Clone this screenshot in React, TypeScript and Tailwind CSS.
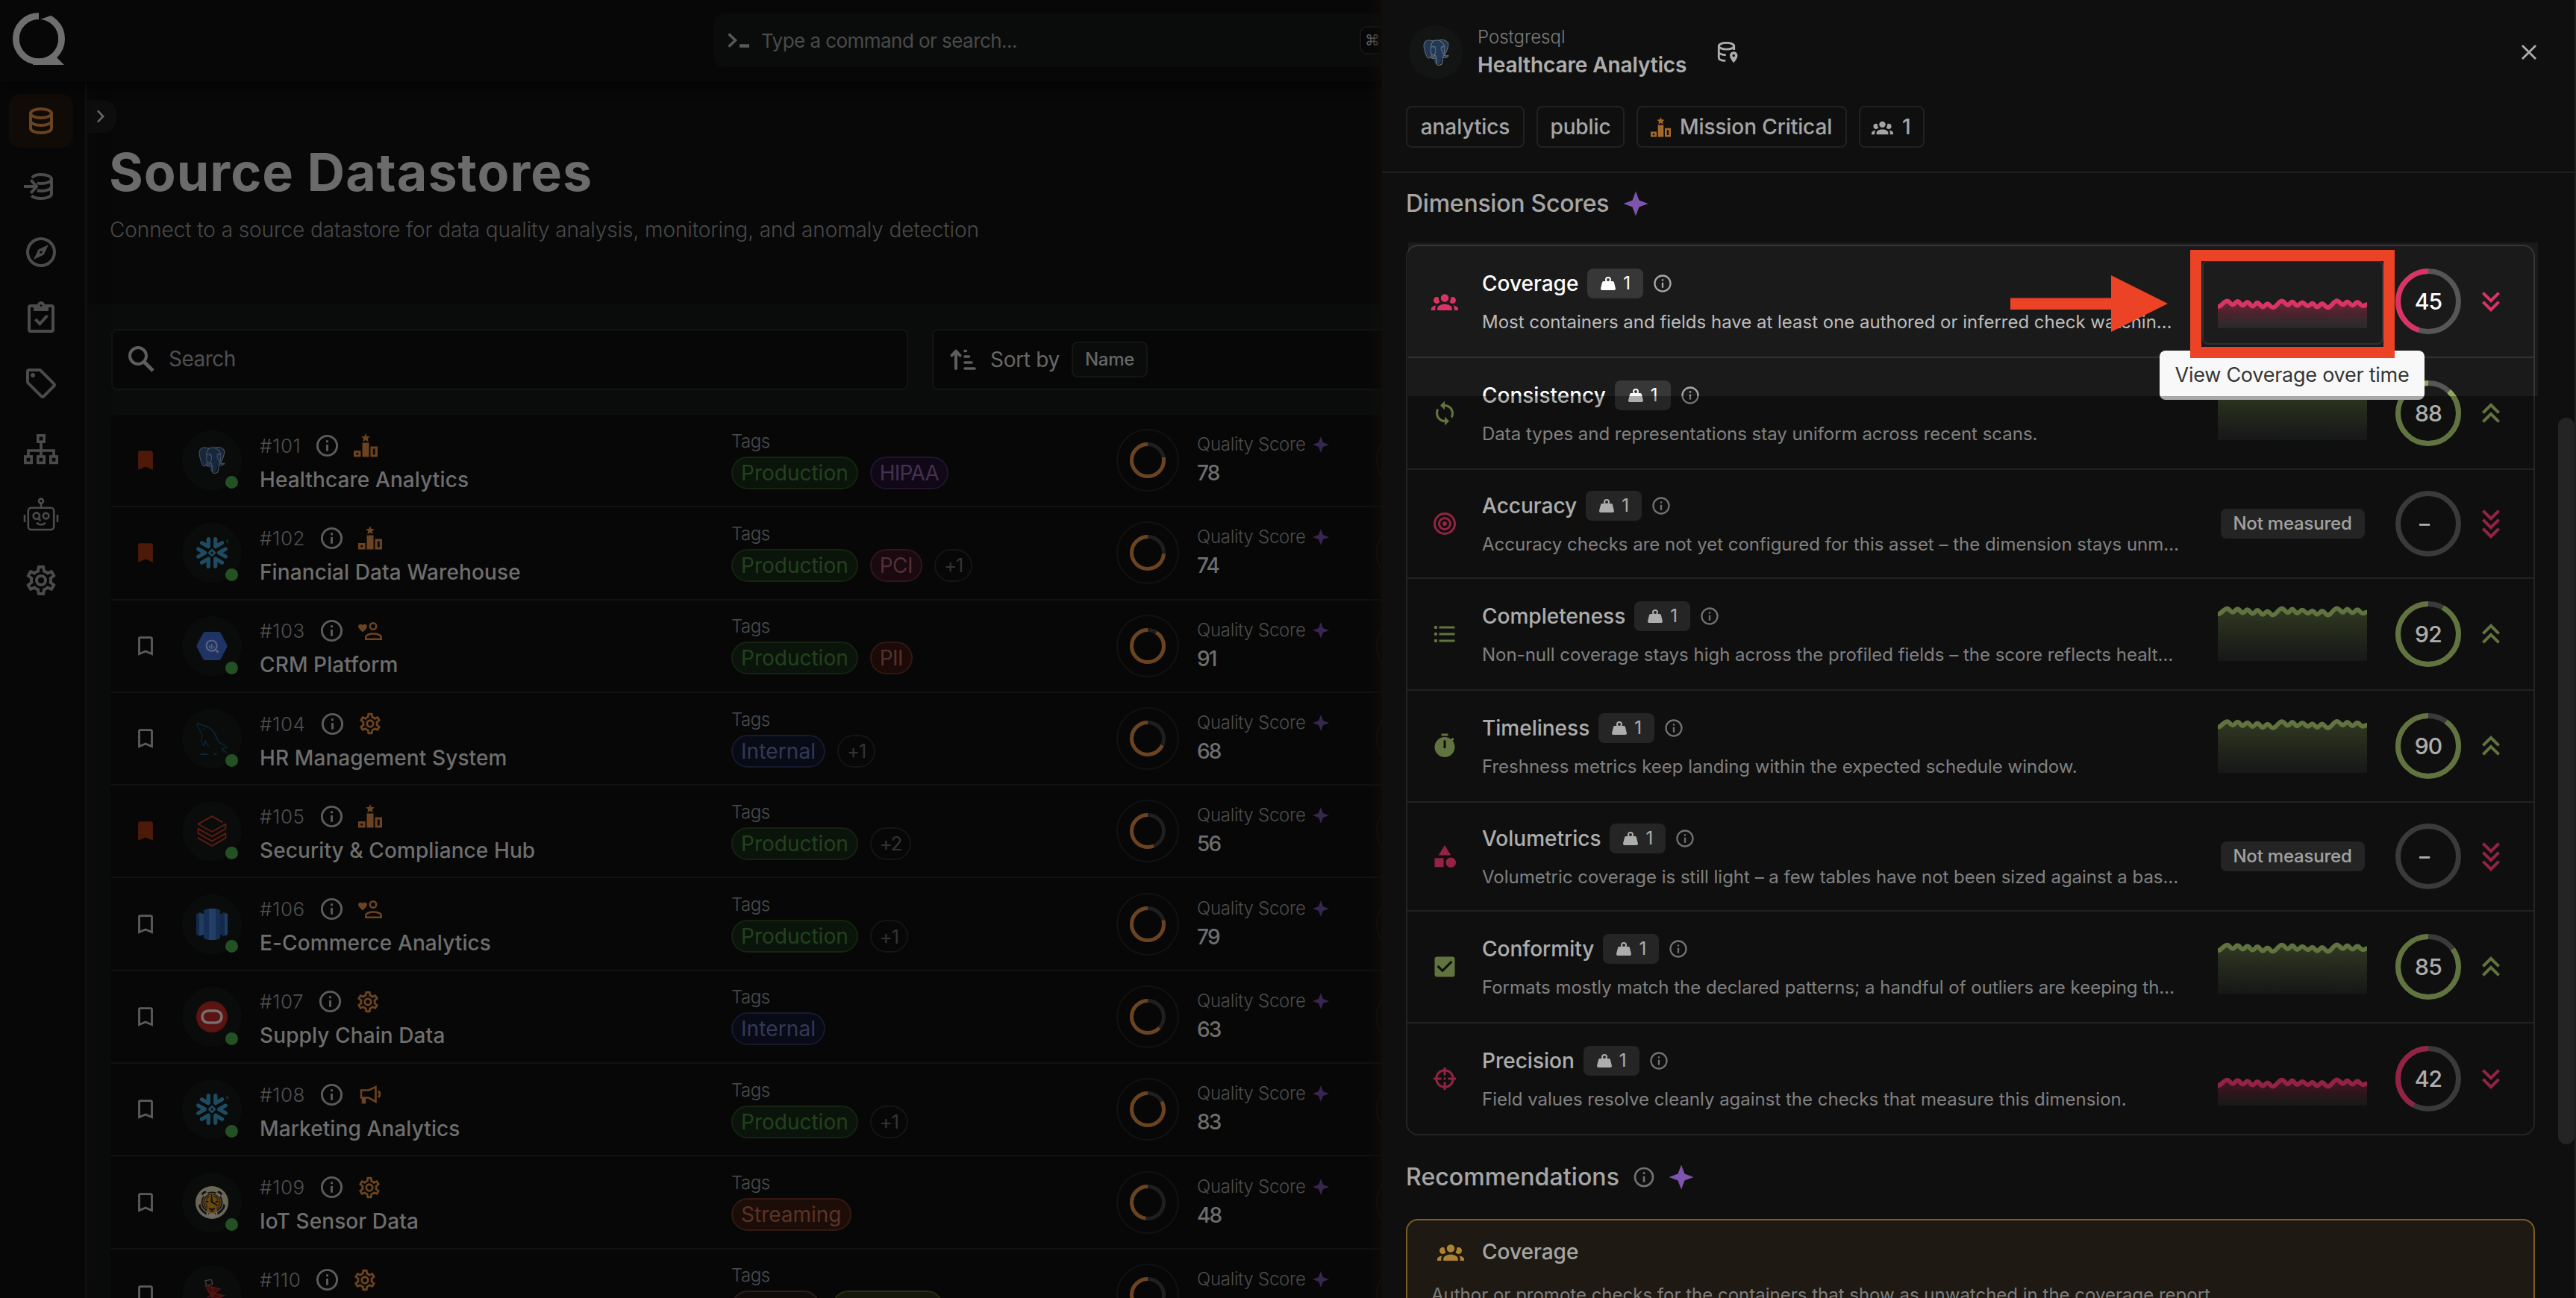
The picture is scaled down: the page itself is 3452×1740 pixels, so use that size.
import React from "react";
import { SiDatabricks, SiGooglebigquery, SiMysql, SiPostgresql, SiSnowflake, SiTimescale } from "react-icons/si";

const P = {
  group:
    "M12,5.5A3.5,3.5 0 0,1 15.5,9A3.5,3.5 0 0,1 12,12.5A3.5,3.5 0 0,1 8.5,9A3.5,3.5 0 0,1 12,5.5M5,8C5.56,8 6.08,8.15 6.53,8.42C6.38,9.85 6.8,11.27 7.66,12.38C7.16,13.34 6.16,14 5,14A3,3 0 0,1 2,11A3,3 0 0,1 5,8M19,8A3,3 0 0,1 22,11A3,3 0 0,1 19,14C17.84,14 16.84,13.34 16.34,12.38C17.2,11.27 17.62,9.85 17.47,8.42C17.92,8.15 18.44,8 19,8M5.5,18.25C5.5,16.18 8.41,14.5 12,14.5C15.59,14.5 18.5,16.18 18.5,18.25V20H5.5V18.25M0,20V18.5C0,17.11 1.89,15.94 4.45,15.6C3.86,16.28 3.5,17.22 3.5,18.25V20H0M24,20H20.5V18.25C20.5,17.22 20.14,16.28 19.55,15.6C22.11,15.94 24,17.11 24,18.5V20Z",
  info: "M11,9H13V7H11M12,20C7.59,20 4,16.41 4,12C4,7.59 7.59,4 12,4C16.41,4 20,7.59 20,12C20,16.41 16.41,20 12,20M12,2A10,10 0 0,0 2,12A10,10 0 0,0 12,22A10,10 0 0,0 22,12A10,10 0 0,0 12,2M11,17H13V11H11V17Z",
  weight:
    "M12,3A4,4 0 0,1 16,7C16,7.73 15.81,8.41 15.46,9H18C18.95,9 19.75,9.67 19.95,10.56C21.96,18.57 22,18.78 22,19A2,2 0 0,1 20,21H4A2,2 0 0,1 2,19C2,18.78 2.04,18.57 4.05,10.56C4.25,9.67 5.05,9 6,9H8.54C8.19,8.41 8,7.73 8,7A4,4 0 0,1 12,3M12,5A2,2 0 0,0 10,7A2,2 0 0,0 12,9A2,2 0 0,0 14,7A2,2 0 0,0 12,5Z",
  sync: "M12,18A6,6 0 0,1 6,12C6,11 6.25,10.03 6.7,9.2L5.24,7.74C4.46,8.97 4,10.43 4,12A8,8 0 0,0 12,20V23L16,19L12,15M12,4V1L8,5L12,9V6A6,6 0 0,1 18,12C18,13 17.75,13.97 17.3,14.8L18.76,16.26C19.54,15.03 20,13.57 20,12A8,8 0 0,0 12,4Z",
  bullseye:
    "M12,2A10,10 0 0,0 2,12A10,10 0 0,0 12,22A10,10 0 0,0 22,12A10,10 0 0,0 12,2M12,4A8,8 0 0,1 20,12A8,8 0 0,1 12,20A8,8 0 0,1 4,12A8,8 0 0,1 12,4M12,6A6,6 0 0,0 6,12A6,6 0 0,0 12,18A6,6 0 0,0 18,12A6,6 0 0,0 12,6M12,8A4,4 0 0,1 16,12A4,4 0 0,1 12,16A4,4 0 0,1 8,12A4,4 0 0,1 12,8M12,10A2,2 0 0,0 10,12A2,2 0 0,0 12,14A2,2 0 0,0 14,12A2,2 0 0,0 12,10Z",
  list: "M7,5H21V7H7V5M7,13V11H21V13H7M4,4.5A1.5,1.5 0 0,1 5.5,6A1.5,1.5 0 0,1 4,7.5A1.5,1.5 0 0,1 2.5,6A1.5,1.5 0 0,1 4,4.5M4,10.5A1.5,1.5 0 0,1 5.5,12A1.5,1.5 0 0,1 4,13.5A1.5,1.5 0 0,1 2.5,12A1.5,1.5 0 0,1 4,10.5M7,19V17H21V19H7M4,16.5A1.5,1.5 0 0,1 5.5,18A1.5,1.5 0 0,1 4,19.5A1.5,1.5 0 0,1 2.5,18A1.5,1.5 0 0,1 4,16.5Z",
  timer:
    "M19.03,7.39L20.45,5.97C20,5.46 19.55,5 19.04,4.56L17.62,6C16.07,4.74 14.12,4 12,4A9,9 0 0,0 3,13A9,9 0 0,0 12,22C17,22 21,17.97 21,13C21,10.88 20.26,8.93 19.03,7.39M13,14H11V7H13V14M15,1H9V3H15V1Z",
  shapes:
    "M11,13.5V21.5H3V13.5H11M12,2L17.5,11H6.5L12,2M17.5,13C20,13 22,15 22,17.5C22,20 20,22 17.5,22C15,22 13,20 13,17.5C13,15 15,13 17.5,13Z",
  checkbox:
    "M10,17L5,12L6.41,10.58L10,14.17L17.59,6.58L19,8M19,3H5C3.89,3 3,3.89 3,5V19A2,2 0 0,0 5,21H19A2,2 0 0,0 21,19V5C21,3.89 20.1,3 19,3Z",
  down2: "M16.59,5.59L18,7L12,13L6,7L7.41,5.59L12,10.17L16.59,5.59M16.59,11.59L18,13L12,19L6,13L7.41,11.59L12,16.17L16.59,11.59Z",
  up2: "M7.41,18.41L6,17L12,11L18,17L16.59,18.41L12,13.83L7.41,18.41M7.41,12.41L6,11L12,5L18,11L16.59,12.41L12,7.83L7.41,12.41Z",
  down3:
    "M16.59,2.59L18,4L12,10L6,4L7.41,2.59L12,7.17L16.59,2.59M16.59,8.59L18,10L12,16L6,10L7.41,8.59L12,13.17L16.59,8.59M16.59,14.59L18,16L12,22L6,16L7.41,14.59L12,19.17L16.59,14.59Z",
  bookmark: "M17,3H7A2,2 0 0,0 5,5V21L12,18L19,21V5C19,3.89 18.1,3 17,3Z",
  bookmarkO: "M17,18L12,15.82L7,18V5H17M17,3H7A2,2 0 0,0 5,5V21L12,18L19,21V5C19,3.89 18.1,3 17,3Z",
  star4: "M12,1L9,9L1,12L9,15L12,23L15,15L23,12L15,9L12,1Z",
  cog: "M12,8A4,4 0 0,1 16,12A4,4 0 0,1 12,16A4,4 0 0,1 8,12A4,4 0 0,1 12,8M12,10A2,2 0 0,0 10,12A2,2 0 0,0 12,14A2,2 0 0,0 14,12A2,2 0 0,0 12,10M10,22C9.75,22 9.54,21.82 9.5,21.58L9.13,18.93C8.5,18.68 7.96,18.34 7.44,17.94L4.95,18.95C4.73,19.03 4.46,18.95 4.34,18.73L2.34,15.27C2.21,15.05 2.27,14.78 2.46,14.63L4.57,12.97L4.5,12L4.57,11L2.46,9.37C2.27,9.22 2.21,8.95 2.34,8.73L4.34,5.27C4.46,5.05 4.73,4.96 4.95,5.05L7.44,6.05C7.96,5.66 8.5,5.32 9.13,5.07L9.5,2.42C9.54,2.18 9.75,2 10,2H14C14.25,2 14.46,2.18 14.5,2.42L14.87,5.07C15.5,5.32 16.04,5.66 16.56,6.05L19.05,5.05C19.27,4.96 19.54,5.05 19.66,5.27L21.66,8.73C21.79,8.95 21.73,9.22 21.54,9.37L19.43,11L19.5,12L19.43,13L21.54,14.63C21.73,14.78 21.79,15.05 21.66,15.27L19.66,18.73C19.54,18.95 19.27,19.04 19.05,18.95L16.56,17.95C16.04,18.34 15.5,18.68 14.87,18.93L14.5,21.58C14.46,21.82 14.25,22 14,22H10M11.25,4L10.88,6.61C9.68,6.86 8.62,7.5 7.85,8.39L5.44,7.35L4.69,8.65L6.8,10.2C6.4,11.37 6.4,12.64 6.8,13.8L4.68,15.36L5.43,16.66L7.86,15.62C8.63,16.5 9.68,17.14 10.87,17.38L11.24,20H12.76L13.13,17.39C14.32,17.14 15.37,16.5 16.14,15.62L18.57,16.66L19.32,15.36L17.2,13.81C17.6,12.64 17.6,11.37 17.2,10.2L19.31,8.65L18.56,7.35L16.15,8.39C15.38,7.5 14.32,6.86 13.12,6.62L12.75,4H11.25Z",
  compass:
    "M7,17L10.2,10.2L17,7L13.8,13.8L7,17M12,11.1A0.9,0.9 0 0,0 11.1,12A0.9,0.9 0 0,0 12,12.9A0.9,0.9 0 0,0 12.9,12A0.9,0.9 0 0,0 12,11.1M12,2A10,10 0 0,1 22,12A10,10 0 0,1 12,22A10,10 0 0,1 2,12A10,10 0 0,1 12,2M12,4A8,8 0 0,0 4,12A8,8 0 0,0 12,20A8,8 0 0,0 20,12A8,8 0 0,0 12,4Z",
  tag: "M21.41,11.58L12.41,2.58C12.04,2.21 11.53,2 11,2H4A2,2 0 0,0 2,4V11C2,11.53 2.21,12.04 2.59,12.41L11.59,21.41C11.96,21.78 12.47,22 13,22C13.53,22 14.04,21.79 14.41,21.41L21.41,14.41C21.78,14.04 22,13.53 22,13C22,12.47 21.79,11.96 21.41,11.58M13,20L4,11V4H11L20,13M6.5,5A1.5,1.5 0 0,1 8,6.5A1.5,1.5 0 0,1 6.5,8A1.5,1.5 0 0,1 5,6.5A1.5,1.5 0 0,1 6.5,5Z",
};

type IconName = keyof typeof P;

function Icon({ name, className }: { name: IconName; className: string }) {
  return (
    <svg viewBox="0 0 24 24" className={`shrink-0 ${className}`} fill="currentColor">
      <path fillRule="evenodd" d={P[name]} />
    </svg>
  );
}

function Stroke({ className, children, w = 2 }: { className: string; children: React.ReactNode; w?: number }) {
  return (
    <svg viewBox="0 0 24 24" className={`shrink-0 ${className}`} fill="none" stroke="currentColor" strokeWidth={w}>
      {children}
    </svg>
  );
}

/* ---------- sidebar ---------- */

function Sidebar() {
  return (
    <nav className="z-10 flex w-[116px] shrink-0 flex-col gap-4 border-r-2 border-[#14110f] bg-[#070707] pt-4 pl-3 text-[#4b4b4b] shadow-[0_0_24px_#0c0b0a]">
      <div className="flex h-[72px] w-[86px] items-center justify-center rounded-[16px] bg-[#110b08]">
        <Stroke className="size-12 text-[#6b4320]">
          <ellipse cx="12" cy="7" rx="7" ry="3" />
          <path d="M5 7v10c0 1.7 3.1 3 7 3s7-1.3 7-3V7M5 12c0 1.7 3.1 3 7 3s7-1.3 7-3" />
        </Stroke>
      </div>
      <div className="flex h-[72px] w-[86px] items-center justify-center">
        <Stroke className="size-12">
          <path d="M6 6.2C6.8 4.9 9.2 4 12 4c3.900 0 7 1.300 7 3s-3.100 3-7 3c-1 0-1.900-.1-2.700-.3M19 7v10c0 1.700-3.100 3-7 3-2.900 0-5.300-.7-6.400-1.800M19 12c0 1.700-3.100 3-7 3-1 0-1.800-.1-2.600-.2" />
          <path d="M0.500 12h8M5.200 7.600L9 12l-3.800 4.400" />
        </Stroke>
      </div>
      <div className="flex h-[72px] w-[86px] items-center justify-center">
        <Icon name="compass" className="size-12" />
      </div>
      <div className="flex h-[72px] w-[86px] items-center justify-center">
        <Stroke className="size-12">
          <rect x="4" y="4" width="16" height="17" rx="1" />
          <path d="M7 4h10v3.500H7z M9.500 3.500a2.500 2.500 0 0 1 5 0" fill="currentColor" stroke="none" />
          <path d="M8.200 13l3 3 5-5.500" />
          <circle cx="12" cy="3.800" r=".7" fill="#070707" stroke="none" />
        </Stroke>
      </div>
      <div className="flex h-[72px] w-[86px] items-center justify-center">
        <Icon name="tag" className="size-12" />
      </div>
      <div className="flex h-[72px] w-[86px] items-center justify-center">
        <Stroke className="size-12" w={1.8}>
          <rect x="9.900" y="2.900" width="4.200" height="4.200" />
          <rect x="1.400" y="17" width="4.200" height="4.200" />
          <rect x="9.900" y="17" width="4.200" height="4.200" />
          <rect x="18.400" y="17" width="4.200" height="4.200" />
          <path d="M12 7v10M3.500 17v-4h17v4" />
        </Stroke>
      </div>
      <div className="flex h-[72px] w-[86px] items-center justify-center">
        <Stroke className="size-12" w={1.3}>
          <circle cx="12" cy="2.800" r="1.500" />
          <path d="M12 4.400v3M1 12v5M23 12v5" />
          <rect x="3.400" y="7.400" width="17.200" height="14.600" rx="2" />
          <circle cx="8.900" cy="12.800" r="2.100" />
          <path d="M10.200 14.300l1.500 1.800" />
          <circle cx="15.300" cy="12.800" r="1.900" />
          <path d="M9.300 17.200c.5 1.900 4.900 1.900 5.400 0" />
        </Stroke>
      </div>
      <div className="flex h-[72px] w-[86px] items-center justify-center">
        <Icon name="cog" className="size-12" />
      </div>
    </nav>
  );
}

/* ---------- header ---------- */

function Header() {
  return (
    <header className="z-20 flex h-[110px] shrink-0 items-start bg-[#070707] shadow-[0_4px_14px_#030303]">
      <svg viewBox="0 0 72 72" className="mt-4 ml-4 size-[72px]" fill="#6e6e6e">
        <circle cx="36" cy="36" r="30.500" fill="none" stroke="#6e6e6e" strokeWidth="9" />
        <path d="M28 71h42L59.500 60.500 52 63l-24 3z" />
        <circle cx="36" cy="36.300" r="26" fill="#070707" />
        <path d="M36 0v10h2L53 4.500V0z" fill="#070707" />
      </svg>
      <div className="mt-[18px] ml-[869px] flex h-[72px] w-[1000px] items-center rounded-[12px] bg-[#0a0c0b] pl-[18px]">
        <svg viewBox="0 0 29 20" className="h-5 w-[29px]" fill="none" stroke="#575757">
          <path d="M1.500 1.500L10.500 10l-9 8.500" strokeWidth="3.600" />
          <path d="M16 17.500h13" strokeWidth="4.500" />
        </svg>
        <span className="ml-4 w-[802px] text-[26px] tracking-[-0.550px] whitespace-nowrap text-[#4a4a4a]">Type a command or search...</span>
        <span className="flex h-[38px] w-10 items-center rounded-[10px] border-2 border-[#161616] bg-[#070707] pl-[5px] font-['DejaVu_Sans'] text-xl text-[#606060]">⌘</span>
      </div>
    </header>
  );
}

/* ---------- data store list ---------- */

function Podium({ className }: { className: string }) {
  return (
    <svg viewBox="0 0 32 32" className={`shrink-0 ${className}`} fill="currentColor">
      <path d="M16 0l1.700 3.900 4.300.4-3.200 2.800.9 4.200L16 9.100l-3.700 2.200.9-4.200L10 4.300l4.300-.4z" />
      <rect x="11.500" y="12.500" width="9" height="19" />
      <path fillRule="evenodd" d="M0 23h9.500v8.500H0zM3.300 26v2.600h2.900V26zM22.500 17.500H32v14h-9.500zM25.800 20.500v8h2.900v-8z" />
    </svg>
  );
}

function HeartPerson({ className }: { className: string }) {
  return (
    <svg viewBox="0 0 32 32" className={`shrink-0 ${className}`} fill="none" stroke="currentColor">
      <path d="M6 17.500C2 14 0 12 0 9.600 0 6.600 4 5.500 6 8.200 8 5.500 12 6.600 12 9.600c0 2.400-2 4.400-6 7.900z" fill="currentColor" stroke="none" />
      <circle cx="20" cy="9.500" r="4.200" strokeWidth="2.600" />
      <path d="M10.300 26.700v-2.500c0-3 5-4.700 10-4.700s10.400 1.700 10.400 4.700v2.500z" strokeWidth="2.600" />
    </svg>
  );
}

function Bullhorn({ className }: { className: string }) {
  return (
    <svg viewBox="0 0 32 32" className={`shrink-0 ${className}`} fill="none" stroke="currentColor" strokeWidth="2.600">
      <path d="M4 10.500h10L23.500 6v20L14 20.500H4z" />
      <path d="M7.500 20.500v8" strokeWidth="5.500" />
      <path d="M27 11.500c2.500 2.500 2.500 6 0 8.500" strokeWidth="3" />
    </svg>
  );
}

function MiniIcon({ kind }: { kind: string }) {
  if (kind === "podium") return <Podium className="size-8" />;
  if (kind === "heart") return <HeartPerson className="size-8" />;
  if (kind === "horn") return <Bullhorn className="size-8" />;
  return <Icon name="cog" className="-ml-[2px] size-[34px]" />;
}

function Elephant({ body, line, className }: { body: string; line: string; className: string }) {
  return (
    <div className={`relative ${className}`}>
      <svg viewBox="0 0 24 24" className="absolute inset-0 size-full" fill={body}>
        <path d="M1 5C1 2 4 .8 8 1c3-.8 6-.8 8 0 4-.5 7 1 7 4 0 4-2 8-4 10 2 .2 3.500 0 4-.3-1 2-4 2.300-6 2.100 0 3-.8 6-3.500 6-3 0-3.500-3-3.500-6.500-2 1.500-3.500.8-5-.2C3 15 1 9 1 5z" />
      </svg>
      <SiPostgresql className="absolute inset-0 size-full" color={line} />
    </div>
  );
}

function Logo({ kind }: { kind: string }) {
  switch (kind) {
    case "postgres":
      return <Elephant className="size-9" body="#16263c" line="#4a545f" />;
    case "snowflake":
      return <SiSnowflake className="size-11" viewBox="0 0 22.800 24" color="#1f4b62" />;
    case "bigquery":
      return (
        <svg viewBox="0 0 42 38" className="h-[38px] w-[42px]">
          <path d="M12 0h18q2 0 3 2l8 15q1 2 0 4l-8 15q-1 2-3 2H12q-2 0-3-2L1 21q-1-2 0-4L9 2q1-2 3-2z" fill="#1f3464" />
          <SiGooglebigquery x="12.500" y="10.500" size={18} color="#5a6480" />
        </svg>
      );
    case "mysql":
      return <SiMysql className="size-11" viewBox="13.900 3.600 10 10" color="#0d2536" />;
    case "databricks":
      return <SiDatabricks className="size-[42px]" color="#5c1b12" />;
    case "redshift":
      return (
        <svg viewBox="0 0 42 42" className="size-[42px]">
          <path d="M0 7l6-2v32l-6-2z" fill="#12294a" />
          <path d="M4 5.500L10 7v28l-6 1.500z" fill="#213c61" />
          <path d="M42 7l-6-2v32l6-2z" fill="#213c61" />
          <path d="M38 5.500L32 7v28l6 1.500z" fill="#12294a" />
          <path d="M10 2l6-2h9v42h-9l-6-2z" fill="#172f54" />
          <path d="M17 0h8l7 2v38l-7 2h-8z" fill="#233f66" />
          <path d="M26 0l6 2v38l-6 2z" fill="#162e51" />
        </svg>
      );
    case "oracle":
      return (
        <svg viewBox="0 0 42 42" className="size-[42px]">
          <circle cx="21" cy="21" r="21" fill="#5b1412" />
          <rect x="8" y="13" width="26" height="16" rx="8" fill="none" stroke="#747070" strokeWidth="3.600" />
        </svg>
      );
    case "tiger":
      return (
        <svg viewBox="0 0 44 44" className="size-11">
          <circle cx="22" cy="22" r="22" fill="#6c6655" />
          <circle cx="22" cy="23" r="13" fill="#6b4a12" />
          <SiTimescale x="4" y="5" size={36} color="#10131c" />
          <path d="M18 37h8v4h-8z" fill="#6c6c6c" />
        </svg>
      );
    default:
      return (
        <svg viewBox="0 0 42 42" className="size-[42px]" fill="none">
          <path d="M12 2l8-2 2 6-8 3z" stroke="#3d3d3d" strokeWidth="1.500" />
          <path d="M12 8l20 5-8 6 13 3-14 5-6-10zM17 17l7 2M20 10l4 9M15 24l9-4" fill="#3b0f0d" stroke="#571714" strokeWidth="1.500" />
        </svg>
      );
  }
}

const CHIP: Record<string, string> = {
  Production: "bg-[#0b140b] border-[#15230f] text-[#23411f]",
  HIPAA: "bg-[#110817] border-[#21142c] text-[#45304f] tracking-[-0.800px]",
  PCI: "bg-[#1a090e] border-[#31161d] text-[#52303a] tracking-[-0.500px]",
  PII: "bg-[#1c0a08] border-[#321813] text-[#55312c] tracking-[-0.500px]",
  Internal: "bg-[#080b16] border-[#161a2d] text-[#333855] tracking-[0.100px]",
  Streaming: "bg-[#1d0d09] border-[#331a12] text-[#5b3326]",
  brown: "w-[119px] bg-[#110c0a] border-[#2a1f1b]",
  olive: "w-[149px] bg-[#14170a] border-[#272d12]",
};

function Donut({ value, className, r, w, track, bar }: { value: number; className: string; r: number; w: number; track: string; bar: string }) {
  const size = 2 * r + w;
  return (
    <svg viewBox={`0 0 ${size} ${size}`} className={className} fill="none" strokeWidth={w}>
      <circle cx={size / 2} cy={size / 2} r={r} stroke={track} />
      {value > 0 && (
        <circle
          cx={size / 2}
          cy={size / 2}
          r={r}
          stroke={bar}
          pathLength={100}
          strokeDasharray={`${value} 100`}
          transform={`rotate(-90 ${size / 2} ${size / 2}) translate(0 ${size}) scale(1 -1)`}
        />
      )}
    </svg>
  );
}

type Store = { id: string; name: string; saved?: boolean; logo: string; mini: string; tags: string[]; score: number | null };

const STORES: Store[] = [
  { id: "#101", name: "Healthcare Analytics", saved: true, logo: "postgres", mini: "podium", tags: ["Production", "HIPAA"], score: 78 },
  { id: "#102", name: "Financial Data Warehouse", saved: true, logo: "snowflake", mini: "podium", tags: ["Production", "PCI", "+1"], score: 74 },
  { id: "#103", name: "CRM Platform", logo: "bigquery", mini: "heart", tags: ["Production", "PII"], score: 91 },
  { id: "#104", name: "HR Management System", logo: "mysql", mini: "cog", tags: ["Internal", "+1"], score: 68 },
  { id: "#105", name: "Security & Compliance Hub", saved: true, logo: "databricks", mini: "podium", tags: ["Production", "+2"], score: 56 },
  { id: "#106", name: "E-Commerce Analytics", logo: "redshift", mini: "heart", tags: ["Production", "+1"], score: 79 },
  { id: "#107", name: "Supply Chain Data", logo: "oracle", mini: "cog", tags: ["Internal"], score: 63 },
  { id: "#108", name: "Marketing Analytics", logo: "snowflake", mini: "horn", tags: ["Production", "+1"], score: 83 },
  { id: "#109", name: "IoT Sensor Data", logo: "tiger", mini: "cog", tags: ["Streaming"], score: 48 },
  { id: "#110", name: "", logo: "mssql", mini: "cog", tags: ["brown", "olive"], score: null },
];

function StoreRow({ s }: { s: Store }) {
  return (
    <div className="flex h-[124.300px] shrink-0 items-center border-b-[2px] border-[#121212] bg-[#070707] pl-[29px] whitespace-nowrap">
      <Icon name={s.saved ? "bookmark" : "bookmarkO"} className={s.saved ? "size-[34px] text-[#4d1a09]" : "size-[34px] text-[#5c5c5c]"} />
      <div className="relative ml-8 flex size-20 shrink-0 items-center justify-center rounded-full bg-[#0a0c0b]">
        <Logo kind={s.logo} />
        <span className="absolute right-[5px] bottom-[2px] size-[17px] rounded-full bg-[#245123]" />
      </div>
      <div className="ml-6 flex w-[632px] shrink-0 flex-col gap-[9px] pt-[5px]">
        <div className="flex h-9 items-center">
          <span className="text-[26px] font-light tracking-[0.600px] text-[#505050]">{s.id}</span>
          <Icon name="info" className="ml-[18px] size-[35px] text-[#5c5c5c]" />
          <span className="ml-[18px] text-[#6b4320]">
            <MiniIcon kind={s.mini} />
          </span>
        </div>
        <div className="flex h-9 items-center pt-px text-[28px] font-medium tracking-[0.100px] text-[#6e6e6e]">{s.name}</div>
      </div>
      <div className="flex w-[516px] shrink-0 flex-col gap-1 pb-[3px]">
        <div className="flex h-8 items-center text-[24px] font-light tracking-[-0.500px] text-[#4c4c4c]">Tags</div>
        <div className="flex gap-4">
          {s.tags.map((t) =>
            t.startsWith("+") ? (
              <span key={t} className="flex h-11 items-center rounded-full border-2 border-[#151515] px-[11px] text-[26px] tracking-[-1.500px] text-[#333333]">
                {t}
              </span>
            ) : (
              <span key={t} className={`flex h-11 items-center rounded-full border-2 px-[11px] text-[28px] ${CHIP[t]}`}>
                {t === "brown" || t === "olive" ? "" : t}
              </span>
            ),
          )}
        </div>
      </div>
      <div className="flex size-[84px] shrink-0 items-center justify-center rounded-full border-2 border-[#121212]">
        <Donut value={s.score ?? 55} className="size-12" r={21.5} w={5} track="#1f1f1f" bar="#6b4320" />
      </div>
      <div className="ml-6 flex w-[240px] shrink-0 flex-col gap-[2px]">
        <div className="flex h-8 items-center text-[24px] font-light tracking-[-0.300px] text-[#4c4c4c]">
          Quality Score
          <Icon name="star4" className="ml-2 size-6 text-[#372650]" />
        </div>
        <div className="flex h-10 items-center text-[28px] font-medium tracking-[-1.800px] text-[#6e6e6e]">{s.score}</div>
      </div>
      <div className="size-[84px] shrink-0 rounded-full border-2 border-[#121212]" />
    </div>
  );
}

function Main() {
  return (
    <main className="flex min-w-0 flex-1 flex-col bg-[#080808]">
      <div className="flex h-[298px] shrink-0 flex-col">
        <div className="mt-6 flex h-11 w-10 items-center justify-center rounded-r-[18px] bg-[#0e0e0e]">
          <svg viewBox="0 0 12 20" className="mr-1 h-[18px] w-[11px]" fill="none" stroke="#6b6b6b" strokeWidth="3">
            <path d="M2 1.500L10 10l-8 8.500" />
          </svg>
        </div>
        <h1 className="mt-[12px] ml-[30px] flex h-20 items-center text-[70px] font-bold tracking-[1px] whitespace-nowrap text-[#6b6b6b]">Source Datastores</h1>
        <p className="mt-[18px] ml-[31px] flex h-10 items-center text-[28px] font-light tracking-[-0.090px] whitespace-nowrap text-[#484848]">
          Connect to a source datastore for data quality analysis, monitoring, and anomaly detection
        </p>
      </div>
      <div className="flex flex-1 flex-col bg-[#0a0c0b] pl-8">
        <div className="flex h-[148px] shrink-0 gap-8 pt-[33px] pl-px">
          <div className="flex h-[82px] w-[1068px] items-center rounded-[8px] border-2 border-[#131313] bg-[#070707] pb-[2px] pl-5 text-[28px] tracking-[-0.500px] text-[#4f4f4f]">
            <svg viewBox="0 0 36 36" className="mr-[19px] size-9" fill="none" stroke="#5e5e5e">
              <circle cx="14" cy="14" r="11" strokeWidth="4" />
              <path d="M22 22l12 12" strokeWidth="5" />
            </svg>
            Search
          </div>
          <div className="flex h-[82px] flex-1 items-center rounded-[8px] border-2 border-[#131313] bg-[#070707] pl-[22px] text-[28px] tracking-[-0.300px] text-[#676767]">
            <svg viewBox="0 0 36 28" className="mr-[18px] h-7 w-9" fill="none" stroke="#5e5e5e" strokeWidth="4" strokeLinecap="round" strokeLinejoin="round">
              <path d="M8 26V4M2.500 8.500L8 2.500l5.500 6" />
              <path d="M20 2.500h1.500M20 10h5.500M20 18h9M20 26h13" strokeWidth="3.600" />
            </svg>
            Sort by
            <span className="ml-4 flex h-12 w-[102px] items-center justify-center rounded-[8px] border-2 border-[#151515] bg-[#0a0c0b] text-[24px] font-medium">Name</span>
          </div>
        </div>
        <div className="ml-px flex flex-col overflow-hidden rounded-tl-[8px]">
          {STORES.map((s) => (
            <StoreRow key={s.id} s={s} />
          ))}
        </div>
      </div>
    </main>
  );
}

/* ---------- drawer ---------- */

const WAVE: [number, number][] = [
  [0, 3.5], [12.7, -4], [20, 1], [26.5, -3.5], [33.4, 1.8], [39.5, -2.5], [46.800, 2.8], [53, -1.8], [60.3, 4], [66.4, -0.4],
  [73.7, 4.6], [86, -4], [94, 1.4], [99.800, -3.2], [106.3, 2.1], [113.2, -2.1], [120.5, 2.5], [126.7, -1], [133.2, 3.9],
  [139.7, -0.7], [147.4, 4.6], [159.7, -4.3], [167.8, 1], [173.5, -3.2], [180.4, 1.8], [187, -2.5], [194.2, 2.5], [200, 0.7],
];

function Sparkline({ value, color }: { value: number; color: string }) {
  const base = 72 - value * 0.72;
  const y = (i: number) => (base + WAVE[i][1]).toFixed(1);
  let line = `M${WAVE[0][0]} ${y(0)}`;
  for (let i = 1; i < WAVE.length; i++) {
    const dx = (WAVE[i][0] - WAVE[i - 1][0]) * 0.38;
    line += `C${(WAVE[i - 1][0] + dx).toFixed(1)} ${y(i - 1)} ${(WAVE[i][0] - dx).toFixed(1)} ${y(i)} ${WAVE[i][0]} ${y(i)}`;
  }
  const id = `spark-${value}`;
  return (
    <svg viewBox="0 0 200 72" className="h-[72px] w-[200px] shrink-0 overflow-visible">
      <defs>
        <linearGradient id={id} x1="0" y1="0" x2="0" y2="1">
          <stop offset="0" stopColor={color} stopOpacity="0.42" />
          <stop offset="0.5" stopColor={color} stopOpacity="0.24" />
          <stop offset="1" stopColor="#8fa09a" stopOpacity="0.09" />
        </linearGradient>
      </defs>
      <path d={`${line}V72H0Z`} fill={`url(#${id})`} />
      <path d={line} fill="none" stroke={color} strokeWidth="6" strokeLinejoin="round" />
    </svg>
  );
}

const GREEN = "#8faa5d";
const PINK = "#d93463";

function Crosshair() {
  return (
    <Stroke className="size-9">
      <circle cx="12" cy="12" r="7.500" />
      <path d="M12 2v7M12 15v7M2 12h7M15 12h7M11 12h2" />
    </Stroke>
  );
}

type Dim = { name: string; icon: React.ReactNode; text: string; value: number | null; h: string; arrow: IconName; good: boolean };

const DIMS: Dim[] = [
  { name: "Coverage", icon: <Icon name="group" className="size-9" />, text: "Most containers and fields have at least one authored or inferred check watchin…", value: 45, h: "h-[150px]", arrow: "down2", good: false },
  { name: "Consistency", icon: <Icon name="sync" className="size-9" />, text: "Data types and representations stay uniform across recent scans.", value: 88, h: "h-[150px]", arrow: "up2", good: true },
  { name: "Accuracy", icon: <Icon name="bullseye" className="size-9" />, text: "Accuracy checks are not yet configured for this asset – the dimension stays unm…", value: null, h: "h-[146px]", arrow: "down3", good: false },
  { name: "Completeness", icon: <Icon name="list" className="size-9" />, text: "Non-null coverage stays high across the profiled fields – the score reflects healt…", value: 92, h: "h-[150px]", arrow: "up2", good: true },
  { name: "Timeliness", icon: <Icon name="timer" className="size-9" />, text: "Freshness metrics keep landing within the expected schedule window.", value: 90, h: "h-[150px]", arrow: "up2", good: true },
  { name: "Volumetrics", icon: <Icon name="shapes" className="size-9" />, text: "Volumetric coverage is still light – a few tables have not been sized against a bas…", value: null, h: "h-[146px]", arrow: "down3", good: false },
  { name: "Conformity", icon: <Icon name="checkbox" className="size-9" />, text: "Formats mostly match the declared patterns; a handful of outliers are keeping th…", value: 85, h: "h-[150px]", arrow: "up2", good: true },
  { name: "Precision", icon: <Crosshair />, text: "Field values resolve cleanly against the checks that measure this dimension.", value: 42, h: "h-[148px]", arrow: "down2", good: false },
];

function DimensionRow({ d }: { d: Dim }) {
  const tone = d.good ? "text-[#8faa5d]" : "text-[#d93463]";
  return (
    <div className={`flex shrink-0 items-center border-b-2 border-[#323232] pr-[33px] pl-8 whitespace-nowrap last:border-b-0 ${d.h}`}>
      <div className={tone}>{d.icon}</div>
      <div className="ml-8 flex min-w-0 flex-1 flex-col gap-[14px] pt-px">
        <div className="flex h-10 items-center text-[28px] font-medium text-white">
          {d.name}
          <span className="ml-3 flex h-10 items-center gap-2 rounded-[8px] bg-[#373737] pr-[17px] pl-4 text-[24px] font-normal">
            <Icon name="weight" className="size-6" />
            <span>1</span>
          </span>
          <Icon name="info" className="ml-3 size-7 text-[#a8a8a8]" />
        </div>
        <div className="flex h-9 items-center text-[24px] tracking-[-0.010px] text-[#bdbdbd]">{d.text}</div>
      </div>
      <div className="flex w-[200px] shrink-0 justify-center">
        {d.value === null ? (
          <span className="flex h-10 w-[193px] items-center justify-center rounded-[8px] bg-[#353535] text-[24px] font-medium tracking-[-0.200px] text-[#ededed]">Not measured</span>
        ) : (
          <Sparkline value={d.value} color={d.good ? GREEN : PINK} />
        )}
      </div>
      <div className="relative ml-[38px] flex size-[88px] shrink-0 items-center justify-center">
        <Donut value={d.value ?? 0} className="absolute inset-0 size-full" r={40.5} w={7} track="#565656" bar={d.good ? GREEN : PINK} />
        {d.value === null ? (
          <span className="relative mr-[10px] text-[28px] font-medium text-white">–</span>
        ) : (
          <span className="relative text-[30px] font-medium tracking-[-0.800px] text-white">{d.value}</span>
        )}
      </div>
      <Icon name={d.arrow} className={`ml-4 size-12 ${tone}`} />
    </div>
  );
}

function Drawer() {
  return (
    <aside className="absolute top-0 right-0 z-30 h-[1740px] w-[1600px] overflow-hidden bg-[#171717]">
      <div className="flex h-full flex-col border-r-2 border-[#303030]">
        <div className="flex h-[232px] shrink-0 flex-col border-b-2 border-[#323232] px-8 pt-[34px]">
          <div className="flex items-center pl-1 whitespace-nowrap">
            <div className="flex size-[72px] items-center justify-center rounded-full bg-[#1c2020]">
              <Elephant className="size-[35px]" body="#31557f" line="#98a8b8" />
            </div>
            <div className="ml-5 flex w-[283px] flex-col">
              <span className="flex h-7 items-center text-[24px] font-light text-[#b5b5b5]">Postgresql</span>
              <span className="mt-[5px] flex h-9 items-center text-[28px] font-semibold tracking-[-0.100px] text-white">Healthcare Analytics</span>
            </div>
            <svg viewBox="0 0 24 24" className="ml-[34px] size-9 text-white" fill="none" stroke="currentColor" strokeWidth="1.900">
              <ellipse cx="11" cy="6.500" rx="6.800" ry="2.900" />
              <path d="M4.200 6.500v10.300c0 1.600 2.500 2.700 6 2.800M4.200 11.600c0 1.700 2.800 2.900 6.300 2.900M17.800 6.500V10" />
              <path fillRule="evenodd" stroke="none" fill="currentColor" d="M17.500 11.500c2 0 3.500 1.500 3.500 3.500 0 2.600-3.500 6.500-3.500 6.500S14 17.600 14 15c0-2 1.500-3.500 3.500-3.500zm0 2.300a1.200 1.200 0 1 0 0 2.400 1.200 1.200 0 0 0 0-2.400z" />
            </svg>
            <svg viewBox="0 0 20 20" className="mr-[19px] ml-auto size-5" fill="none" stroke="#ffffff" strokeWidth="2.800">
              <path d="M1 1l18 18M19 1L1 19" />
            </svg>
          </div>
          <div className="mt-9 flex gap-4 text-[28px] font-medium tracking-[-0.100px] whitespace-nowrap text-[#f4f4f4]">
            <span className="flex h-14 w-[159px] items-center justify-center rounded-[8px] border-2 border-[#323232]">analytics</span>
            <span className="flex h-14 w-[118px] items-center justify-center rounded-[8px] border-2 border-[#323232]">public</span>
            <span className="flex h-14 w-[282px] items-center rounded-[8px] border-2 border-[#323232] pl-[17px]">
              <Podium className="mr-3 size-[27px] text-[#f09a40]" />
              Mission Critical
            </span>
            <span className="flex h-14 w-[88px] items-center rounded-[8px] border-2 border-[#323232] pl-[15px]">
              <Icon name="group" className="mr-3 size-[29px]" />1
            </span>
          </div>
        </div>

        <div className="flex h-24 shrink-0 items-center pt-px pb-4 pl-8 text-[32px] font-medium tracking-[-0.250px] text-[#f4f4f4]">
          Dimension Scores
          <Icon name="star4" className="ml-[18px] size-9 text-[#bc7dff]" />
        </div>

        <div className="relative z-10 ml-8 flex w-[1513px] shrink-0 flex-col rounded-[16px] border-2 border-[#363636]">
          {DIMS.map((d) => (
            <DimensionRow key={d.name} d={d} />
          ))}
        </div>

        <div className="relative z-10 flex h-[112px] shrink-0 items-center pl-8 text-[32px] font-medium tracking-[0.100px] text-[#f4f4f4]">
          Recommendations
          <Icon name="info" className="ml-[17px] size-8 text-[#a8a8a8]" />
          <Icon name="star4" className="ml-4 size-9 text-[#bc7dff]" />
        </div>
        <div className="relative z-10 ml-8 flex h-[240px] w-[1513px] shrink-0 flex-col rounded-[16px] border-2 border-[#b88b37] bg-[#2d261b] pl-8 whitespace-nowrap">
          <div className="mt-[22px] flex h-10 items-center pl-2 text-[28px] font-medium text-[#f4f4f4]">
            <Icon name="group" className="mr-6 size-9 text-[#ffc24b]" />
            Coverage
          </div>
          <div className="mt-[20px] flex h-9 items-center text-[24px] text-[#b8b8b8]">
            Author or promote checks for the containers that show as unwatched in the coverage report
          </div>
        </div>
      </div>

      {/* scrollbar thumb */}
      <div className="absolute top-[560px] right-[2px] h-[974px] w-[22px] rounded-full bg-[#353535]" />
      {/* spotlight area behind the hovered row */}
      <div className="absolute top-[325px] left-[35px] h-[206px] w-[1514px] bg-[#1a1a1a]" />
      {/* hovered chart button */}
      <div className="absolute top-[349px] left-[1099px] h-[113px] w-[243px] rounded-[8px] border-2 border-[#2f2f2f] bg-[#1c1c1c]" />
      {/* tooltip */}
      <div className="absolute top-[470px] left-[1042px] z-20 flex h-[66px] w-[355px] items-center justify-center rounded-[8px] bg-[#f8f8f8] pt-px text-[27px] tracking-[-0.250px] whitespace-nowrap text-[#363636]">
        View Coverage over time
      </div>
      {/* scrim around the spotlight */}
      <div className="pointer-events-none absolute top-[325px] left-[35px] z-30 h-[206px] w-[1514px] shadow-[0_0_0_4000px_rgba(0,0,0,0.32)]" />
      {/* callout */}
      <div className="absolute top-[335px] left-[1083px] z-40 h-[145px] w-[274px] border-[15px] border-[#ec4226]" />
      <svg viewBox="0 0 212 76" className="absolute top-[369px] left-[842px] z-40 h-[76px] w-[212px]" fill="#ec4226">
        <path d="M0 30.500h135V0l76 38-76 38V46H0z" />
      </svg>
    </aside>
  );
}

export default function App() {
  return (
    <div className="relative flex h-[1740px] w-[3452px] flex-col overflow-hidden bg-[#070707] font-[Inter,sans-serif]">
      <Header />
      <div className="flex min-h-0 flex-1">
        <Sidebar />
        <Main />
      </div>
      <div className="absolute top-0 left-[1832px] z-20 h-[1740px] w-5 bg-linear-to-r from-transparent to-[#120d08]/60" />
      <Drawer />
    </div>
  );
}
